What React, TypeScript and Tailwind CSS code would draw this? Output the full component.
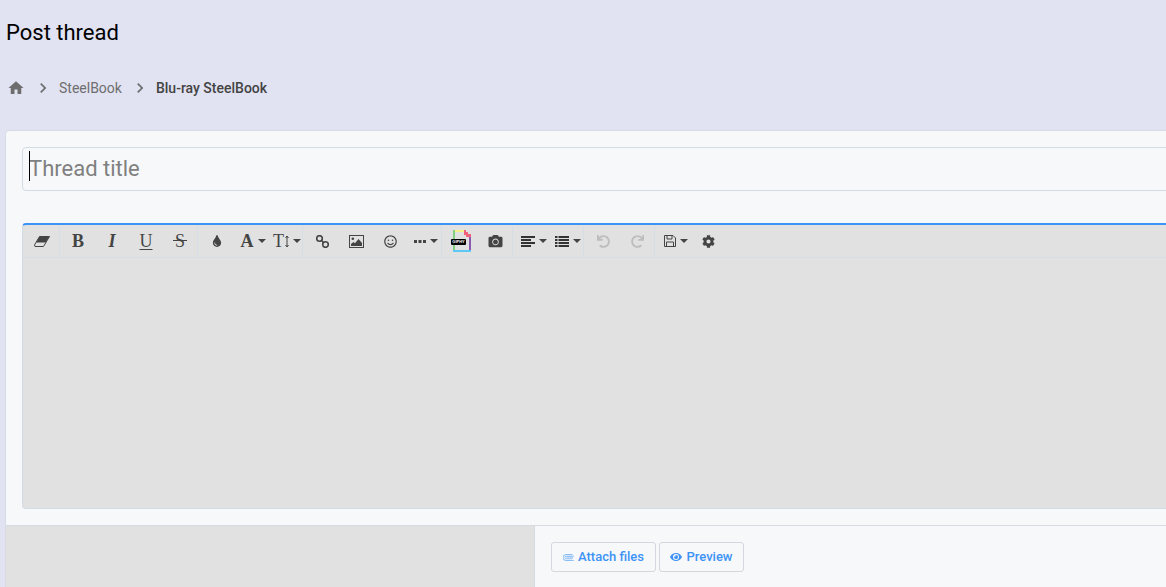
import { FaCamera, FaCog, FaEye, FaRedo, FaRegSmile, FaTint, FaUndo } from "react-icons/fa";
import { MdChevronRight, MdHome } from "react-icons/md";
import type { ReactNode } from "react";

const Caret = () => (
  <svg width="8" height="4" viewBox="0 0 8 4" fill="#444" className="ml-[4px] shrink-0">
    <path d="M0 0H8L4 4Z" />
  </svg>
);

function Btn({ children, className = "" }: { children: ReactNode; className?: string }) {
  return <div className={"relative w-[34px] h-[32px] shrink-0 flex items-center justify-center text-[#444] " + className}>{children}</div>;
}

const Sep = ({ className = "w-[3px]" }: { className?: string }) => (
  <div className={"shrink-0 " + className}>
    <div className="w-px h-[30px] bg-[#d5dde6]" />
  </div>
);

const EraserIcon = () => (
  <svg width="16" height="11" viewBox="0 0 16 11">
    <path d="M5.5 0.5H15.5L9.5 10.5H1L0.5 9Z" fill="none" stroke="#444" />
    <path d="M5.5 0.5H15.5L11.5 6.5H2Z" fill="#444" />
  </svg>
);

const LinkIcon = () => (
  <svg width="13" height="13" viewBox="0 0 13 13" fill="none" stroke="#444" strokeWidth="1.6">
    <circle cx="3.5" cy="3.5" r="2.8" />
    <circle cx="9.5" cy="9.5" r="2.8" />
    <path d="M5 5L8 8" />
  </svg>
);

const ImageIcon = () => (
  <svg width="15" height="13" viewBox="0 0 15 13">
    <rect x="0.5" y="0.5" width="14" height="12" fill="none" stroke="#444" />
    <circle cx="3.8" cy="3.8" r="1.3" fill="#444" />
    <path d="M2 11V9L4.5 7L6 8.2L9.5 4L13 8V11Z" fill="#444" />
  </svg>
);

const MoreIcon = () => (
  <svg width="12" height="3" viewBox="0 0 12 3" fill="#444">
    <rect width="3" height="3" />
    <rect x="4.5" width="3" height="3" />
    <rect x="9" width="3" height="3" />
  </svg>
);

const AlignIcon = () => (
  <svg width="14" height="11" viewBox="0 0 14 11" fill="#333">
    <rect width="14" height="2" />
    <rect y="3" width="10" height="2" />
    <rect y="6" width="14" height="2" />
    <rect y="9" width="10" height="2" />
  </svg>
);

const ListIcon = () => (
  <svg width="14" height="11" viewBox="0 0 14 11" fill="#333">
    <path d="M0 0H2.5V2H0ZM3.5 0H14V2H3.5ZM0 3H2.5V5H0ZM3.5 3H14V5H3.5ZM0 6H2.5V8H0ZM3.5 6H14V8H3.5ZM0 9H2.5V11H0ZM3.5 9H14V11H3.5Z" />
  </svg>
);

const SaveIcon = () => (
  <svg width="12" height="12" viewBox="0 0 12 12" fill="none" stroke="#444">
    <path d="M0.5 0.5H9L11.5 3V11.5H0.5Z" />
    <path d="M3 0.5V4H8V0.5M2.5 11.5V7H9.5V11.5" />
  </svg>
);

const TextSizeIcon = () => (
  <svg width="4" height="13" viewBox="0 0 4 13" fill="none" stroke="#444" className="ml-px">
    <path d="M2 1V12M0.5 3L2 1L3.5 3M0.5 10L2 12L3.5 10" />
  </svg>
);

const ClipIcon = () => (
  <svg width="11" height="7" viewBox="0 0 11 7" fill="none" stroke="#7ab5f7" strokeWidth="0.9" className="mr-[4px]">
    <path d="M10.5 2.2H3.2A1.3 1.3 0 0 0 3.2 4.8H8.6A0.9 0.9 0 0 0 8.6 3H3.5M10.5 2.2A2.1 2.1 0 0 1 8.6 6.5H3A3 3 0 0 1 3 0.5H9.5" />
  </svg>
);

const Giphy = () => (
  <div className="relative w-[18px] h-[22px] ml-[2px]">
    <svg width="18" height="22" viewBox="0 0 18 22" fill="none" className="absolute left-0 top-0">
      <path d="M0 1H11" stroke="#f5f08c" strokeWidth="2" />
      <path d="M1 0V22" stroke="#80d080" strokeWidth="2" />
      <path d="M0 21H18" stroke="#5cc8f5" strokeWidth="2" />
      <path d="M17 6V20" stroke="#8a5cb0" strokeWidth="2" />
      <path d="M11 0H13V2H15V4H18V7H13V5H11Z" fill="#f0607a" />
    </svg>
    <span className="absolute left-[-2px] top-[9px] h-[6px] w-[15px] bg-black rounded-[1px] text-white text-[4px] leading-[6px] text-center font-bold font-['Liberation_Sans',sans-serif]">GIPHY</span>
  </div>
);

export default function App() {
  return (
    <div className="h-[587px] w-[1166px] overflow-hidden bg-[#e1e2f2] font-['Roboto',sans-serif]">
      <h1 className="pl-[6px] pt-[19px] h-[70px] text-[22px] leading-[28px] text-black">Post thread</h1>
      <div className="flex items-center h-[36px] pl-[7px] text-[14px] text-[#6e6e6e]">
        <MdHome className="w-[18px] h-[18px]" />
        <MdChevronRight className="w-[20px] h-[20px] ml-[8px]" />
        <span className="ml-[6px]">SteelBook</span>
        <MdChevronRight className="w-[20px] h-[20px] ml-[8px]" />
        <span className="ml-[6px] font-medium text-[#444]">Blu-ray SteelBook</span>
      </div>
      <div className="mt-[24px] ml-[5px] w-[1300px] h-[480px] bg-[#f7f8fa] border border-[#d8dae6] rounded-[4px]">
        <div className="px-[16px] pt-[16px]">
          <div className="h-[44px] flex items-center border border-[#d3dce6] rounded-[4px] pl-[6px] pb-[2px] text-[22px] text-[#808080]">
            <div className="relative">
              <span className="absolute left-0 top-[-1px] w-px h-[30px] bg-black" />
              Thread title
            </div>
          </div>
          <div className="mt-[32px] h-[286px] bg-[#e1e1e1] border border-[#d3dce6] border-t-2 border-t-[#3d93f5] rounded-[4px]">
            <div className="flex items-center h-[33px] pl-[2px] border-b border-[#d8dee6]">
              <Btn><EraserIcon /></Btn>
              <Sep className="w-[2px]" />
              <Btn className="font-['Liberation_Serif',serif] font-bold text-[18px]">B</Btn>
              <Btn className="font-['Liberation_Serif',serif] italic font-bold text-[18px]">I</Btn>
              <Btn className="font-['Liberation_Serif',serif] underline underline-offset-2 text-[18px]">U</Btn>
              <Btn className="font-['Liberation_Serif',serif] text-[18px]">
                S<span className="absolute left-[10px] top-[15px] w-[14px] h-px bg-[#444]" />
              </Btn>
              <Sep />
              <Btn><FaTint className="w-[10px] h-[12px]" /></Btn>
              <Btn className="pl-[4px] font-['Liberation_Serif',serif] font-bold text-[18px]"><span>A</span><Caret /></Btn>
              <Btn className="pl-[4px] font-['Liberation_Serif',serif] text-[18px]">T<TextSizeIcon /><Caret /></Btn>
              <Sep />
              <Btn><LinkIcon /></Btn>
              <Btn><ImageIcon /></Btn>
              <Btn><FaRegSmile className="w-[13px] h-[13px]" /></Btn>
              <Btn className="pl-[4px]"><MoreIcon /><Caret /></Btn>
              <Sep />
              <Btn><Giphy /></Btn>
              <Btn><FaCamera className="w-[15px] h-[14px]" /></Btn>
              <Sep />
              <Btn className="pl-[4px]"><AlignIcon /><Caret /></Btn>
              <Btn className="pl-[4px]"><ListIcon /><Caret /></Btn>
              <Sep />
              <Btn className="text-[#bdbdbd]"><FaUndo className="w-[13px] h-[13px]" /></Btn>
              <Btn className="text-[#bdbdbd]"><FaRedo className="w-[13px] h-[13px]" /></Btn>
              <Sep />
              <Btn className="pl-[4px]"><SaveIcon /><Caret /></Btn>
              <Btn><FaCog className="w-[13px] h-[13px]" /></Btn>
            </div>
          </div>
        </div>
        <div className="mt-[16px] flex h-[70px] border-t border-[#d5dbe3]">
          <div className="w-[528px] bg-[#e1e1e1]" />
          <div className="flex-1 border-l border-[#d5dbe3] pl-[16px] pt-[16px] flex gap-[3px] items-start">
            <button className="h-[30px] w-[105px] flex items-center justify-center border border-[#d3d7de] rounded-[3px] text-[13px] font-medium text-[#3d93f5]">
              <ClipIcon />Attach files
            </button>
            <button className="h-[30px] w-[85px] flex items-center justify-center border border-[#d3d7de] rounded-[3px] text-[13px] font-medium text-[#3d93f5]">
              <FaEye className="w-[12px] h-[12px] mr-[4px]" />Preview
            </button>
          </div>
        </div>
      </div>
    </div>
  );
}
